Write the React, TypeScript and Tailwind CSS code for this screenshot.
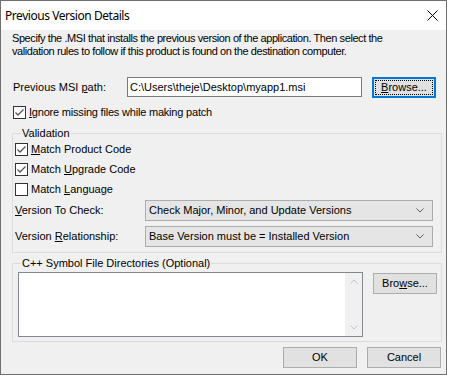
import React from "react";

const font = { fontFamily: '"Liberation Sans", Arial, sans-serif' };

function Check({ checked }: { checked: boolean }) {
  return (
    <div className="w-[13px] h-[13px] border border-[#333333] bg-white flex items-center justify-center shrink-0">
      {checked && (
        <svg width="11" height="11" viewBox="0 0 11 11">
          <path d="M1.5 5.5 L4 8 L9.5 2.5" fill="none" stroke="#555555" strokeWidth="1.3" />
        </svg>
      )}
    </div>
  );
}

function Chevron({ up, color }: { up?: boolean; color: string }) {
  return (
    <svg width="8" height="5" viewBox="0 0 8 5">
      <path d={up ? "M0.5 4.5 L4 1 L7.5 4.5" : "M0.5 0.5 L4 4 L7.5 0.5"} fill="none" stroke={color} strokeWidth="1" />
    </svg>
  );
}

function Combo({ text }: { text: string }) {
  return (
    <div className="w-[288px] h-[21px] border border-[#acacac] bg-[#e5e5e5] flex items-center pl-[3px] pr-[8px] justify-between">
      <span>{text}</span>
      <Chevron color="#606060" />
    </div>
  );
}

function Btn({ children, className = "" }: { children: React.ReactNode; className?: string }) {
  return (
    <div className={"h-[21px] border border-[#adadad] bg-[#e1e1e1] flex items-center justify-center " + className}>
      {children}
    </div>
  );
}

export default function App() {
  return (
    <div className="w-[449px] h-[376px] bg-white" style={font}>
      <div className="w-[447px] h-[375px] flex flex-col bg-[#f0f0f0] border border-[#707070] text-[11px] leading-[13px] text-black">
        <div className="h-[29px] bg-white flex items-center justify-between pl-[4px] pr-[8px] shrink-0">
          <span
            className="text-[12px] text-black tracking-[-0.45px]"
            style={{ fontFamily: '"Noto Sans", "Open Sans", sans-serif' }}
          >
            Previous Version Details
          </span>
          <svg width="11" height="11" viewBox="0 0 11 11">
            <path d="M0.5 0.5 L10.5 10.5 M10.5 0.5 L0.5 10.5" stroke="#000" strokeWidth="1" />
          </svg>
        </div>
        <div className="flex flex-col pl-[11px] pr-[4px]">
          <div className="mt-[2px] h-[26px] tracking-[-0.42px]">
            Specify the .MSI that installs the previous version of the application. Then select the
            <br />
            validation rules to follow if this product is found on the destination computer.
          </div>
          <div className="mt-[19px] h-[21px] flex items-center">
            <span className="w-[115px] pl-[1px]">
              Previous MSI <u>p</u>ath:
            </span>
            <div className="w-[235px] h-[20px] border border-[#7a7a7a] bg-white flex items-center pl-[2px] self-start">
              C:\Users\theje\Desktop\myapp1.msi
            </div>
            <div className="ml-[10px] w-[64px] h-[21px] border-2 border-[#0078d7] bg-[#e1e1e1] p-[1px]">
              <div className="w-full h-full border border-dotted border-black flex items-center justify-center">
                <span>
                  <u>B</u>rowse...
                </span>
              </div>
            </div>
          </div>
          <div className="mt-[8px] h-[13px] flex items-center gap-[3px] pl-[1px]">
            <Check checked />
            <span className="tracking-[-0.2px]">
              <u>I</u>gnore missing files while making patch
            </span>
          </div>
          <div className="relative mt-[14px] w-[430px] border border-[#dcdcdc] pt-[9px] pb-[5px] pl-[2px]">
            <span className="absolute top-[-7px] left-[8px] bg-[#f0f0f0] px-[1px]">Validation</span>
            <div className="flex flex-col gap-[7px]">
              <div className="h-[13px] flex items-center gap-[3px]">
                <Check checked />
                <span>
                  <u>M</u>atch Product Code
                </span>
              </div>
              <div className="h-[13px] flex items-center gap-[3px]">
                <Check checked />
                <span>
                  Match <u>U</u>pgrade Code
                </span>
              </div>
              <div className="h-[13px] flex items-center gap-[3px]">
                <Check checked={false} />
                <span>
                  Match <u>L</u>anguage
                </span>
              </div>
            </div>
            <div className="mt-[4px] flex items-center">
              <span className="w-[130px]">
                <u>V</u>ersion To Check:
              </span>
              <Combo text="Check Major, Minor, and Update Versions" />
            </div>
            <div className="mt-[5px] flex items-center">
              <span className="w-[130px]">
                Version <u>R</u>elationship:
              </span>
              <Combo text="Base Version must be = Installed Version" />
            </div>
          </div>
          <div className="relative mt-[10px] w-[430px] border border-[#dcdcdc] pt-[8px] pb-[4px] pl-[5px] flex items-start">
            <span className="absolute top-[-7px] left-[8px] bg-[#f0f0f0] px-[1px]">
              C++ Symbol File Directories (Optional)
            </span>
            <div className="w-[345px] h-[65px] border border-[#828790] bg-white flex justify-end">
              <div className="w-[17px] h-full bg-[#f0f0f0] flex flex-col items-center justify-between py-[6px]">
                <Chevron up color="#c2c2c2" />
                <Chevron color="#c2c2c2" />
              </div>
            </div>
            <Btn className="ml-[10px] mt-[1px] w-[64px]">
              <span>
                Bro<u>w</u>se...
              </span>
            </Btn>
          </div>
          <div className="mt-[5px] flex justify-end gap-[10px] pr-[1px]">
            <Btn className="w-[74px]">OK</Btn>
            <Btn className="w-[74px]">Cancel</Btn>
          </div>
        </div>
      </div>
    </div>
  );
}
